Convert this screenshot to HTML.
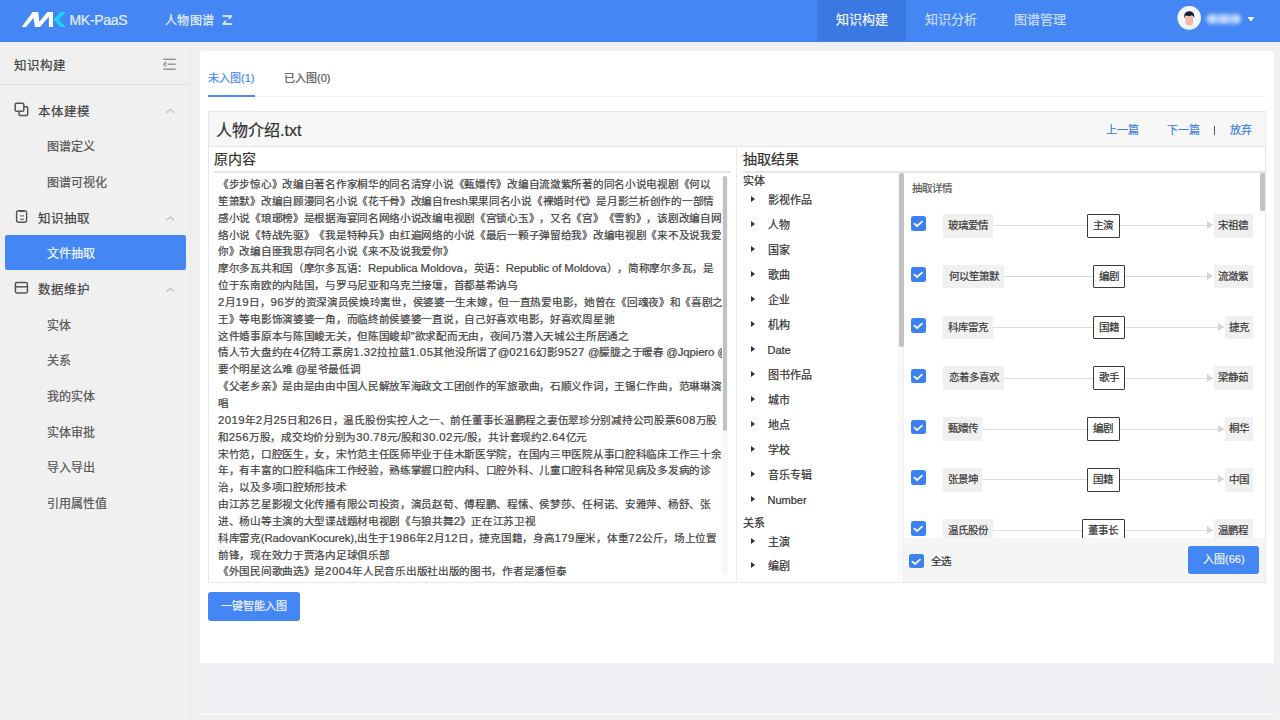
<!DOCTYPE html>
<html lang="zh-CN"><head><meta charset="utf-8">
<style>
*{box-sizing:border-box;margin:0;padding:0}
html,body{-webkit-text-stroke-width:0.22px;text-spacing-trim:space-all;width:1280px;height:720px;overflow:hidden;background:#f0f0f0;font-family:"Liberation Sans",sans-serif;color:#333}
.abs{position:absolute}
#hdr{position:absolute;left:0;top:0;width:1280px;height:41.5px;background:#4386f4;border-bottom:1px solid #3f7fe8;z-index:2}
#hdr .brand{position:absolute;left:69.5px;top:11.5px;font-size:14px;color:#e4eeff;line-height:16px;letter-spacing:-0.3px}
#hdr .proj{position:absolute;left:165px;top:13px;font-size:12px;letter-spacing:0.4px;color:#e6efff;line-height:16px}
#hdr .nav{position:absolute;top:0;height:41px;width:89px;text-align:center;line-height:40px;font-size:13px;color:#c9dcfd}
#hdr .nav.on{background:#3a78e2;color:#f0f5ff}
#side{position:absolute;left:0;top:41px;width:191px;height:679px;background:#f0f0f0;border-right:1px solid #e8e8e8}
#side .ttl{position:absolute;left:14px;top:17px;font-size:12.5px;line-height:16px;color:#444}
#side .sep{position:absolute;left:0;top:43px;width:189px;height:1px;background:#e2e2e2}
.mi{position:absolute;left:38px;font-size:12.5px;line-height:16px;color:#444}
.si{position:absolute;left:47px;font-size:12px;line-height:16px;color:#555}
#side .sel{position:absolute;left:5px;top:194px;width:181px;height:35px;background:#4386f4;border-radius:2px}
.chev{position:absolute;left:166px;width:8px;height:8px}
#card{position:absolute;left:200px;top:51px;width:1074px;height:612px;background:#fff;border-radius:3px 3px 0 0}
#foot{position:absolute;left:201px;top:663px;width:1073px;height:50px;background:#eef0f3}
#footl{position:absolute;left:201px;top:713px;width:1073px;height:2px;background:#fafafa}

.tab{position:absolute;top:71px;font-size:11px;line-height:15px}
#panel{position:absolute;left:208px;top:111px;width:1058px;height:472px;border:1px solid #e8e8e8;background:#fff}
#phead{position:absolute;left:209px;top:112px;width:1056px;height:35px;background:#f7f7f7;border-bottom:1px solid #e6e6e6}
#phead .t{position:absolute;left:7px;top:9px;font-size:16px;line-height:19px;color:#333}
.lnk{position:absolute;top:11px;font-size:11px;line-height:14px;color:#3f7fe6}
.colh{position:absolute;font-size:14px;line-height:17px;color:#333}
.hl{position:absolute;height:1.5px;background:#e6e6e6}
#src{position:absolute;left:218px;top:176px;width:504px;overflow:hidden;font-size:10.6px;letter-spacing:-0.29px;line-height:16.84px;color:#444;white-space:nowrap}
#src i.l{font-style:normal;font-size:11.4px;letter-spacing:-0.12px}
#src b.d{font-weight:normal;letter-spacing:0.45px}
.sb{z-index:5;position:absolute;background:#c2c2c2;border-radius:2px}
.tree{position:absolute;font-size:11px;margin-top:0.7px;line-height:14px;color:#333}
.tri{position:absolute;width:0;height:0;border-left:4px solid #333;border-top:3.5px solid transparent;border-bottom:3.5px solid transparent}
.btn{position:absolute;background:#4386f4;border-radius:3px;color:#eef4ff;font-size:11px;text-align:center}

.cb{position:absolute;width:14.8px;height:14.8px;background:#3b82f0;border-radius:2.5px}
.cb svg{position:absolute;left:0;top:0}
.tg{position:absolute;height:23.5px;line-height:23.5px;padding:0;text-align:center;background:#f0f0f0;font-size:10.5px;color:#3a3a3a;white-space:nowrap}
.rl{position:absolute;height:23.5px;line-height:20.3px;padding:0;text-align:center;background:#fff;border:1.6px solid #3a3a3a;border-radius:1px;font-size:10.5px;color:#333;white-space:nowrap}
.ln{position:absolute;height:1px;background:#dcdcdc}
.ar{position:absolute;width:0;height:0;border-left:6.5px solid #d4d4d4;border-top:4.5px solid transparent;border-bottom:4.5px solid transparent}
</style></head><body>
<div id="hdr">
  <svg class="abs" style="left:0;top:0" width="80" height="41" viewBox="0 0 80 41">
    <polygon fill="#fbfdff" points="21.7,27.1 32.6,12.1 38.3,12.1 39.4,21.75 47.3,12.1 53,12.1 53,27.1 48.9,27.1 48.9,16.8 40,27.1 35,27.1 33.5,17.95 26.1,27.1"/>
    <polygon fill="#16d6fb" points="60.8,12.1 65.6,12.1 58.6,19.6 65.6,27.1 60.8,27.1 53.6,19.6"/>
  </svg>
  <div class="brand">MK-PaaS</div>
  <div class="proj">人物图谱</div>
  <svg class="abs" style="left:218px;top:10px" width="20" height="20" viewBox="218 10 20 20" fill="none" stroke="#cfe2ff" stroke-width="2" stroke-linejoin="round" stroke-linecap="round">
    <path d="M223.3 16 H231.4 L229.2 18.4"/><path d="M231.4 23.9 H223.3 L225.5 21.4"/>
  </svg>
  <svg class="abs" style="left:1170px;top:0" width="100" height="41" viewBox="1170 0 100 41">
    <defs><clipPath id="av"><circle cx="1189.2" cy="17.8" r="11.8"/></clipPath><filter id="bl" x="-30%" y="-80%" width="160%" height="260%"><feGaussianBlur stdDeviation="2"/></filter></defs>
    <circle cx="1189.2" cy="17.8" r="11.8" fill="#f3f7fc"/>
    <g clip-path="url(#av)">
      <path d="M1177 30 L1184.5 25.5 L1189.2 28 L1194 25.5 L1201.5 30 Z" fill="#e8eef8"/>
      <rect x="1185.4" y="15" width="7.6" height="10.4" rx="3.2" fill="#f6b9a9"/>
      <path d="M1184.3 18.5 C1183.6 13.5 1186 11.3 1189.3 11.3 C1192.6 11.3 1194.8 13.4 1194.2 18 C1193.6 16.4 1192.8 15.6 1191.8 15.2 C1190 16.2 1187.5 16.3 1185.8 15.6 C1185 16.3 1184.6 17.2 1184.3 18.5 Z" fill="#172036"/>
    </g>
    <g filter="url(#bl)" fill="#a7c6fb">
      <rect x="1207" y="14.5" width="33" height="9" rx="4"/>
    </g>
    <g filter="url(#bl)" fill="#c9ddfd">
      <circle cx="1211.8" cy="19" r="3.4"/><circle cx="1224.2" cy="19" r="3.4"/><circle cx="1236.5" cy="19" r="3.4"/>
    </g>
    <path d="M1248.6 17.6 L1253.4 17.6 L1251 20.6 Z" fill="#f2f7ff" stroke="#f2f7ff" stroke-width="1.2" stroke-linejoin="round"/>
  </svg>
  <div class="nav on" style="left:817px">知识构建</div>
  <div class="nav" style="left:906px">知识分析</div>
  <div class="nav" style="left:995px">图谱管理</div>
</div>
<div id="side">
  <div class="ttl">知识构建</div>
  <svg class="abs" style="left:160px;top:14px" width="20" height="18" viewBox="160 55 20 18" fill="none" stroke="#8a8a8a" stroke-width="1.3">
    <line x1="163.2" y1="59.3" x2="175.8" y2="59.3"/><line x1="167.6" y1="64.2" x2="175.6" y2="64.2"/><line x1="163.2" y1="69.2" x2="175.8" y2="69.2"/>
    <polyline points="166.2,62 163.9,64.2 166.2,66.4"/>
  </svg>
  <div class="sep"></div>
  <svg class="abs" style="left:10px;top:57px" width="24" height="260" viewBox="10 98 24 260" fill="none" stroke="#555" stroke-width="1.5">
    <path d="M19.5 106.8 h7 a1.2 1.2 0 0 1 1.2 1.2 v6.3 a1.2 1.2 0 0 1 -1.2 1.2 h-6.3 a1.2 1.2 0 0 1 -1.2 -1.2 z"/>
    <rect x="15.2" y="103.3" width="8.6" height="8" rx="1.2" fill="#f0f0f0"/>
    <rect x="16.6" y="210.6" width="10" height="11.6" rx="2" stroke-width="1.4"/>
    <path d="M18.5 211 h6" stroke-width="2"/>
    <path d="M20.2 215.8 h3.8 M20.2 219.4 h3.8" stroke-width="1.3" stroke="#777"/>
    <rect x="15.4" y="282.6" width="12" height="10.4" rx="1.4"/>
    <line x1="15.4" y1="286.8" x2="27.4" y2="286.8"/>
  </svg>
  <svg class="abs" style="left:160px;top:60.7px" width="20" height="240" viewBox="160 101 20 240" fill="none" stroke="#b4b4b4" stroke-width="1.1">
    <polyline points="166.5,111.6 170.2,108.4 173.9,111.6"/>
    <polyline points="166.5,219.1 170.2,215.9 173.9,219.1"/>
    <polyline points="166.5,290.6 170.2,287.4 173.9,290.6"/>
  </svg>
  <div class="mi" style="top:63px">本体建模</div>
  <div class="si" style="top:98.3px">图谱定义</div>
  <div class="si" style="top:134.3px">图谱可视化</div>
  <div class="mi" style="top:170px">知识抽取</div>
  <div class="sel"></div>
  <div class="si" style="top:205.3px;color:#f2f6ff">文件抽取</div>
  <div class="mi" style="top:241px">数据维护</div>
  <div class="si" style="top:277.3px">实体</div>
  <div class="si" style="top:312.3px">关系</div>
  <div class="si" style="top:348.3px">我的实体</div>
  <div class="si" style="top:384.3px">实体审批</div>
  <div class="si" style="top:419.3px">导入导出</div>
  <div class="si" style="top:455.3px">引用属性值</div>
</div>
<div id="card"></div>
<div class="tab" style="left:208px;color:#4a8af4">未入图(1)</div>
<div class="tab" style="left:284px;color:#555">已入图(0)</div>
<div class="abs" style="left:208px;top:95.5px;width:1058px;height:1.5px;background:#f3f3f3"></div>
<div class="abs" style="left:208px;top:95px;width:47px;height:2.2px;background:#4a8af4"></div>
<div id="panel"></div>
<div id="phead"><div class="t">人物介绍.txt</div>
<div class="lnk" style="left:897px">上一篇</div>
<div class="lnk" style="left:958px">下一篇</div>
<div class="abs" style="left:1005px;top:14px;width:1.4px;height:9px;background:#555"></div>
<div class="lnk" style="left:1021px">放弃</div>
</div>
<div class="abs" style="left:736px;top:146px;width:1px;height:436px;background:#ececec"></div>
<div class="colh" style="left:214px;top:151px">原内容</div>
<div class="hl" style="left:213px;top:171px;width:518px"></div>
<div class="colh" style="left:743px;top:151px">抽取结果</div>
<div class="hl" style="left:743px;top:171px;width:523px"></div>
<div id="src">《步步惊心》改编自著名作家桐华的同名清穿小说《甄嬛传》改编自流潋紫所著的同名小说电视剧《何以<br>笙箫默》改编自顾漫同名小说《花千骨》改编自<i class="l">fresh</i>果果同名小说《裸婚时代》是月影兰析创作的一部情<br>感小说《琅琊榜》是根据海宴同名网络小说改编电视剧《宫锁心玉》，又名《宫》《雪豹》，该剧改编自网<br>络小说《特战先驱》《我是特种兵》由红遍网络的小说《最后一颗子弹留给我》改编电视剧《来不及说我爱<br>你》改编自匪我思存同名小说《来不及说我爱你》<br>摩尔多瓦共和国（摩尔多瓦语：<i class="l">Republica Moldova</i>，英语：<i class="l">Republic of Moldova</i>），简称摩尔多瓦，是<br>位于东南欧的内陆国，与罗马尼亚和乌克兰接壤，首都基希讷乌<br><i class="l"><b class="d">2</b></i>月<i class="l"><b class="d">19</b></i>日，<i class="l"><b class="d">96</b></i>岁的资深演员侯焕玲离世，侯婆婆一生未嫁，但一直热爱电影，她曾在《回魂夜》和《喜剧之<br>王》等电影饰演婆婆一角，而临终前侯婆婆一直说，自己好喜欢电影，好喜欢周星驰<br>这件婚事原本与陈国峻无关，但陈国峻却<i class="l">"</i>欲求配而无由，夜间乃潜入天城公主所居通之<br>情人节大盘约在<i class="l"><b class="d">4</b></i>亿特工票房<i class="l"><b class="d">1.32</b></i>拉拉蓝<i class="l"><b class="d">1.05</b></i>其他没所谓了<i class="l">@<b class="d">0216</b></i>幻影<i class="l"><b class="d">9527</b> @</i>朦胧之于暖春 <i class="l">@Jqpiero @</i><br>要个明星这么难 <i class="l">@</i>星爷最低调<br>《父老乡亲》是由是由由中国人民解放军海政文工团创作的军旅歌曲，石顺义作词，王锡仁作曲，范琳琳演<br>唱<br><i class="l"><b class="d">2019</b></i>年<i class="l"><b class="d">2</b></i>月<i class="l"><b class="d">25</b></i>日和<i class="l"><b class="d">26</b></i>日，温氏股份实控人之一、前任董事长温鹏程之妻伍翠珍分别减持公司股票<i class="l"><b class="d">608</b></i>万股<br>和<i class="l"><b class="d">256</b></i>万股，成交均价分别为<i class="l"><b class="d">30.78</b></i>元<i class="l">/</i>股和<i class="l"><b class="d">30.02</b></i>元<i class="l">/</i>股，共计套现约<i class="l"><b class="d">2.64</b></i>亿元<br>宋竹范，口腔医生，女，宋竹范主任医师毕业于佳木斯医学院，在国内三甲医院从事口腔科临床工作三十余<br>年，有丰富的口腔科临床工作经验，熟练掌握口腔内科、口腔外科、儿童口腔科各种常见病及多发病的诊<br>治，以及多项口腔矫形技术<br>由江苏艺星影视文化传播有限公司投资，演员赵荀、傅程鹏、程愫、侯梦莎、任柯诺、安雅萍、杨舒、张<br>进、杨山等主演的大型谍战题材电视剧《与狼共舞<i class="l"><b class="d">2</b></i>》正在江苏卫视<br>科库雷克<i class="l">(RadovanKocurek),</i>出生于<i class="l"><b class="d">1986</b></i>年<i class="l"><b class="d">2</b></i>月<i class="l"><b class="d">12</b></i>日，捷克国籍，身高<i class="l"><b class="d">179</b></i>厘米，体重<i class="l"><b class="d">72</b></i>公斤，场上位置<br>前锋，现在效力于贾洛内足球俱乐部<br>《外国民间歌曲选》是<i class="l"><b class="d">2004</b></i>年人民音乐出版社出版的图书，作者是潘恒泰</div>
<div class="abs" style="left:722px;top:176px;width:5.5px;height:399px;background:#f7f7f7;border-radius:2px"></div>
<div class="sb" style="left:722.5px;top:176px;width:4.5px;height:255px"></div>
<div class="tree" style="left:743px;top:173px">实体</div>
<div class="tri" style="left:751px;top:195.8px"></div><div class="tree" style="left:767.5px;top:192.3px">影视作品</div>
<div class="tri" style="left:751px;top:220.8px"></div><div class="tree" style="left:767.5px;top:217.3px">人物</div>
<div class="tri" style="left:751px;top:245.8px"></div><div class="tree" style="left:767.5px;top:242.3px">国家</div>
<div class="tri" style="left:751px;top:270.8px"></div><div class="tree" style="left:767.5px;top:267.3px">歌曲</div>
<div class="tri" style="left:751px;top:295.8px"></div><div class="tree" style="left:767.5px;top:292.3px">企业</div>
<div class="tri" style="left:751px;top:320.8px"></div><div class="tree" style="left:767.5px;top:317.3px">机构</div>
<div class="tri" style="left:751px;top:345.8px"></div><div class="tree" style="left:767.5px;top:342.3px">Date</div>
<div class="tri" style="left:751px;top:370.8px"></div><div class="tree" style="left:767.5px;top:367.3px">图书作品</div>
<div class="tri" style="left:751px;top:395.8px"></div><div class="tree" style="left:767.5px;top:392.3px">城市</div>
<div class="tri" style="left:751px;top:420.8px"></div><div class="tree" style="left:767.5px;top:417.3px">地点</div>
<div class="tri" style="left:751px;top:445.8px"></div><div class="tree" style="left:767.5px;top:442.3px">学校</div>
<div class="tri" style="left:751px;top:470.8px"></div><div class="tree" style="left:767.5px;top:467.3px">音乐专辑</div>
<div class="tri" style="left:751px;top:495.8px"></div><div class="tree" style="left:767.5px;top:492.3px">Number</div>
<div class="tree" style="left:743px;top:515.5px">关系</div>
<div class="tri" style="left:751px;top:538.0px"></div><div class="tree" style="left:767.5px;top:534.5px">主演</div>
<div class="tri" style="left:751px;top:562.0px"></div><div class="tree" style="left:767.5px;top:558.5px">编剧</div>
<div class="abs" style="left:898px;top:172.5px;width:5.5px;height:403px;background:#f7f7f7;border-radius:2px"></div>
<div class="abs" style="left:903px;top:172.5px;width:1px;height:409px;background:#efefef"></div>
<div class="sb" style="left:898.5px;top:172.5px;width:5px;height:174px"></div>
<div class="abs" style="left:904px;top:172.5px;width:361px;height:409.5px;overflow:hidden">
<div class="abs" style="left:8px;top:8.5px;font-size:10.5px;line-height:14px;color:#555">抽取详情</div>
<div class="cb" style="left:7px;top:43.8px"><svg width="14.8" height="14.8" viewBox="0 0 14.8 14.8"><polyline points="3.3,7.7 6.1,10 11,5.6" fill="none" stroke="#fff" stroke-width="1.7" stroke-linecap="round" stroke-linejoin="round"/></svg></div>
<div class="ln" style="left:89.4px;top:52.8px;width:220.1px"></div>
<div class="ar" style="left:302.5px;top:48.8px"></div>
<div class="tg" style="left:39.4px;top:41.6px;width:50.0px">玻璃爱情</div>
<div class="rl" style="left:183.1px;top:41.6px;width:32.6px">主演</div>
<div class="tg" style="left:309.5px;top:41.6px;width:39.5px">宋祖德</div>
<div class="cb" style="left:7px;top:94.6px"><svg width="14.8" height="14.8" viewBox="0 0 14.8 14.8"><polyline points="3.3,7.7 6.1,10 11,5.6" fill="none" stroke="#fff" stroke-width="1.7" stroke-linecap="round" stroke-linejoin="round"/></svg></div>
<div class="ln" style="left:100.4px;top:103.6px;width:209.1px"></div>
<div class="ar" style="left:302.5px;top:99.6px"></div>
<div class="tg" style="left:39.4px;top:92.4px;width:61.0px">何以笙箫默</div>
<div class="rl" style="left:188.6px;top:92.4px;width:32.6px">编剧</div>
<div class="tg" style="left:309.5px;top:92.4px;width:39.5px">流潋紫</div>
<div class="cb" style="left:7px;top:145.4px"><svg width="14.8" height="14.8" viewBox="0 0 14.8 14.8"><polyline points="3.3,7.7 6.1,10 11,5.6" fill="none" stroke="#fff" stroke-width="1.7" stroke-linecap="round" stroke-linejoin="round"/></svg></div>
<div class="ln" style="left:89.4px;top:154.4px;width:231.1px"></div>
<div class="ar" style="left:313.5px;top:150.4px"></div>
<div class="tg" style="left:39.4px;top:143.1px;width:50.0px">科库雷克</div>
<div class="rl" style="left:188.6px;top:143.1px;width:32.6px">国籍</div>
<div class="tg" style="left:320.5px;top:143.1px;width:28.5px">捷克</div>
<div class="cb" style="left:7px;top:196.2px"><svg width="14.8" height="14.8" viewBox="0 0 14.8 14.8"><polyline points="3.3,7.7 6.1,10 11,5.6" fill="none" stroke="#fff" stroke-width="1.7" stroke-linecap="round" stroke-linejoin="round"/></svg></div>
<div class="ln" style="left:100.4px;top:205.2px;width:209.1px"></div>
<div class="ar" style="left:302.5px;top:201.2px"></div>
<div class="tg" style="left:39.4px;top:193.9px;width:61.0px">恋着多喜欢</div>
<div class="rl" style="left:188.6px;top:193.9px;width:32.6px">歌手</div>
<div class="tg" style="left:309.5px;top:193.9px;width:39.5px">梁静茹</div>
<div class="cb" style="left:7px;top:247.0px"><svg width="14.8" height="14.8" viewBox="0 0 14.8 14.8"><polyline points="3.3,7.7 6.1,10 11,5.6" fill="none" stroke="#fff" stroke-width="1.7" stroke-linecap="round" stroke-linejoin="round"/></svg></div>
<div class="ln" style="left:78.4px;top:256.0px;width:242.1px"></div>
<div class="ar" style="left:313.5px;top:252.0px"></div>
<div class="tg" style="left:39.4px;top:244.8px;width:39.0px">甄嬛传</div>
<div class="rl" style="left:183.1px;top:244.8px;width:32.6px">编剧</div>
<div class="tg" style="left:320.5px;top:244.8px;width:28.5px">桐华</div>
<div class="cb" style="left:7px;top:297.8px"><svg width="14.8" height="14.8" viewBox="0 0 14.8 14.8"><polyline points="3.3,7.7 6.1,10 11,5.6" fill="none" stroke="#fff" stroke-width="1.7" stroke-linecap="round" stroke-linejoin="round"/></svg></div>
<div class="ln" style="left:78.4px;top:306.8px;width:242.1px"></div>
<div class="ar" style="left:313.5px;top:302.8px"></div>
<div class="tg" style="left:39.4px;top:295.6px;width:39.0px">张景坤</div>
<div class="rl" style="left:183.1px;top:295.6px;width:32.6px">国籍</div>
<div class="tg" style="left:320.5px;top:295.6px;width:28.5px">中国</div>
<div class="cb" style="left:7px;top:348.6px"><svg width="14.8" height="14.8" viewBox="0 0 14.8 14.8"><polyline points="3.3,7.7 6.1,10 11,5.6" fill="none" stroke="#fff" stroke-width="1.7" stroke-linecap="round" stroke-linejoin="round"/></svg></div>
<div class="ln" style="left:89.4px;top:357.6px;width:220.1px"></div>
<div class="ar" style="left:302.5px;top:353.6px"></div>
<div class="tg" style="left:39.4px;top:346.3px;width:50.0px">温氏股份</div>
<div class="rl" style="left:177.6px;top:346.3px;width:43.6px">董事长</div>
<div class="tg" style="left:309.5px;top:346.3px;width:39.5px">温鹏程</div>
<div class="abs" style="left:0;top:365.8px;width:362px;height:44px;background:#f5f5f5"></div>
<div class="cb" style="left:5.3px;top:381.1px"><svg width="14.8" height="14.8" viewBox="0 0 14.8 14.8"><polyline points="3.3,7.7 6.1,10 11,5.6" fill="none" stroke="#fff" stroke-width="1.7" stroke-linecap="round" stroke-linejoin="round"/></svg></div>
<div class="abs" style="left:27px;top:381.5px;font-size:10.5px;line-height:14px;color:#333">全选</div>
<div class="btn" style="left:284.2px;top:373.9px;width:71.3px;height:27.2px;line-height:27.2px">入图(66)</div>
<div class="sb" style="left:355.5px;top:0;width:5.5px;height:38px"></div>
</div>
<div class="btn" style="left:208px;top:592px;width:92px;height:29px;line-height:29px">一键智能入图</div>
<div id="foot"></div>
<div id="footl"></div>
</body></html>
